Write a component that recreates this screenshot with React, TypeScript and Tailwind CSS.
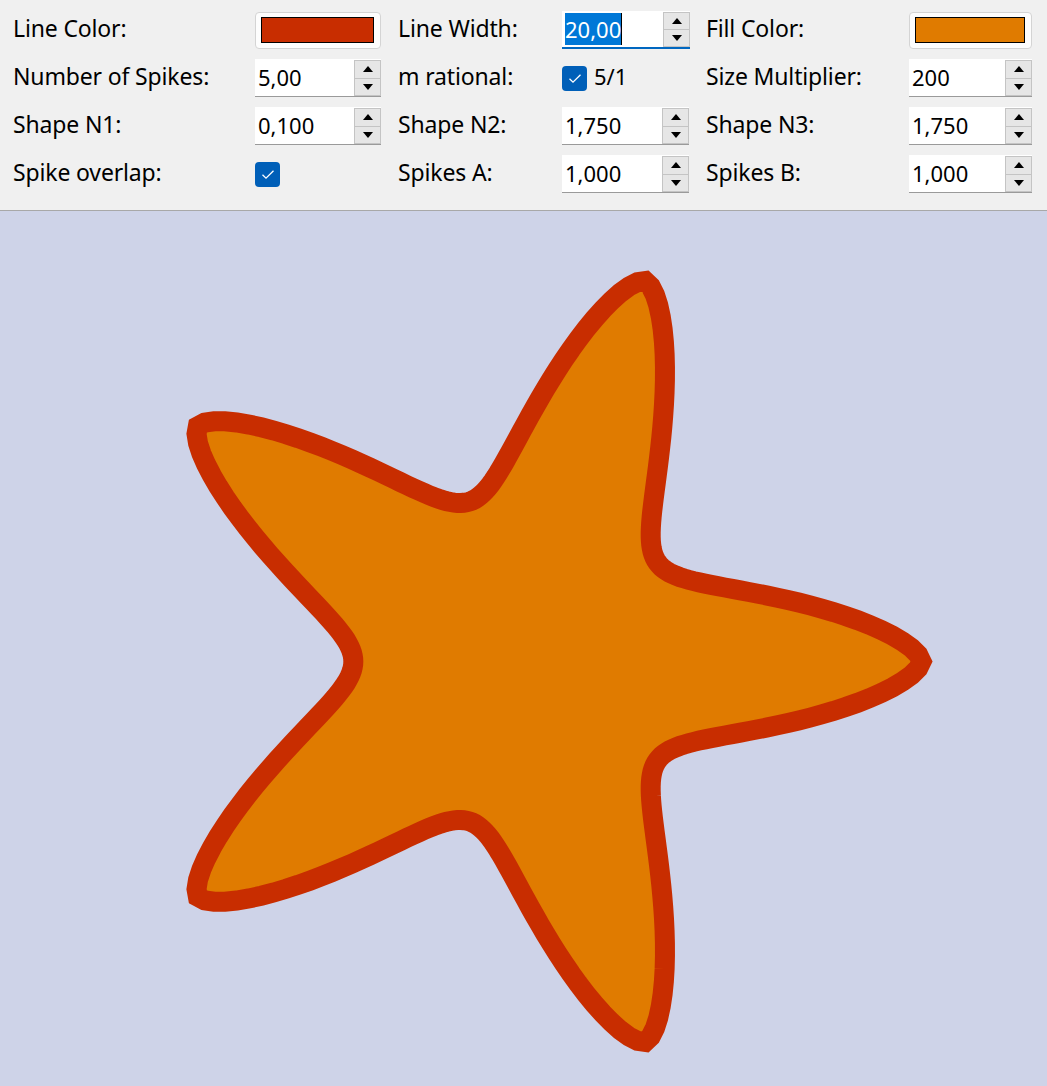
import React from 'react';

const font = { fontFamily: '"Noto Sans", "Open Sans", sans-serif' };

// superformula: m=5, n1=0.1, n2=n3=1.75, a=b=1
function starPath(cx: number, cy: number, scale: number, steps = 360) {
  const m = 5, n1 = 0.1, n2 = 1.75, n3 = 1.75;
  const pts: string[] = [];
  for (let i = 0; i < steps; i++) {
    const phi = (i / steps) * Math.PI * 2;
    const t1 = Math.pow(Math.abs(Math.cos((m * phi) / 4)), n2);
    const t2 = Math.pow(Math.abs(Math.sin((m * phi) / 4)), n3);
    const r = Math.pow(t1 + t2, -1 / n1) * scale;
    const x = cx + r * Math.cos(phi);
    const y = cy - r * Math.sin(phi);
    pts.push(`${x.toFixed(2)},${y.toFixed(2)}`);
  }
  return 'M' + pts.join('L') + 'Z';
}

function Label({ children }: { children: React.ReactNode }) {
  return <div className="flex items-center h-[38px] pb-[3px] text-[23px] tracking-[-0.15px] text-[#000]">{children}</div>;
}

function ColorButton({ color, width }: { color: string; width: string }) {
  return (
    <div className={`${width} h-[37px] rounded-[4px] border border-[#d4d4d4] bg-[#fdfdfd] pl-[5px] pr-[6px] pt-[4px] pb-[5px]`}>
      <div className="h-full w-full border border-black" style={{ backgroundColor: color }} />
    </div>
  );
}

function SpinBox({ value, width, focused }: { value: string; width: string; focused?: boolean }) {
  return (
    <div className={`${width} h-[38px] flex bg-white ${focused ? 'border-b-2 border-[#0067c0]' : 'border-b border-[#9a9a9a]'}`}>
      <div className="flex-1 flex items-center pl-[3px] pb-[1px] text-[22px] text-black">
        {focused ? (
          <>
            <span className="bg-[#0078d7] text-white leading-[32px]">{value}</span>
            <span className="w-[1px] h-[32px] bg-black" />
          </>
        ) : (
          value
        )}
      </div>
      <div className="w-[27px] flex flex-col pt-[1px]">
        <div className="flex-1 flex items-center justify-center bg-[#e6e6e6] border border-[#c4c4c4]">
          <svg width="10" height="6" viewBox="0 0 10 6"><path d="M5 0L10 6H0Z" fill="#000" /></svg>
        </div>
        <div className="flex-1 flex items-center justify-center bg-[#e6e6e6] border border-t-0 border-[#c4c4c4]">
          <svg width="10" height="6" viewBox="0 0 10 6"><path d="M0 0H10L5 6Z" fill="#000" /></svg>
        </div>
      </div>
    </div>
  );
}

function Check() {
  return (
    <div className="w-[25px] h-[25px] rounded-[4px] bg-[#005fb8] flex items-center justify-center">
      <svg width="14" height="11" viewBox="0 0 14 11"><path d="M1.5 5.8L5 9.2L12.5 1.8" fill="none" stroke="#fff" strokeWidth="1.3" /></svg>
    </div>
  );
}

export default function App() {
  const d = starPath(521.5, 450.5, 400);
  return (
    <div className="w-[1047px] h-[1086px] flex flex-col overflow-hidden bg-[#f0f0f0]" style={font}>
      {/* parameter panel */}
      <div className="h-[211px] border-b border-[#a8a8a8] pl-[13px] pt-[11px]">
        <div className="grid grid-cols-[242px_143px_164px_144px_203px_123px] gap-y-[10px]">
          <Label>Line Color:</Label>
          <div className="flex items-center"><ColorButton color="#c82d00" width="w-[126px]" /></div>
          <Label>Line Width:</Label>
          <SpinBox value="20,00" width="w-[128px]" focused />
          <Label>Fill Color:</Label>
          <div className="flex items-center"><ColorButton color="#e07b00" width="w-[123px]" /></div>

          <Label>Number of Spikes:</Label>
          <SpinBox value="5,00" width="w-[126px]" />
          <Label>m rational:</Label>
          <div className="flex items-center gap-[7px] text-[22px]"><Check /><span className="pb-[3px]">5/1</span></div>
          <Label>Size Multiplier:</Label>
          <SpinBox value="200" width="w-[123px]" />

          <Label>Shape N1:</Label>
          <SpinBox value="0,100" width="w-[126px]" />
          <Label>Shape N2:</Label>
          <SpinBox value="1,750" width="w-[127px]" />
          <Label>Shape N3:</Label>
          <SpinBox value="1,750" width="w-[123px]" />

          <Label>Spike overlap:</Label>
          <div className="flex items-center"><Check /></div>
          <Label>Spikes A:</Label>
          <SpinBox value="1,000" width="w-[127px]" />
          <Label>Spikes B:</Label>
          <SpinBox value="1,000" width="w-[123px]" />
        </div>
      </div>

      {/* drawing canvas */}
      <div className="flex-1 bg-[#ced3e8]">
        <svg width="1047" height="875" viewBox="0 0 1047 875">
          <path d={d} fill="#e07b00" stroke="#c82d00" strokeWidth="20" strokeLinejoin="miter" />
        </svg>
      </div>
    </div>
  );
}
